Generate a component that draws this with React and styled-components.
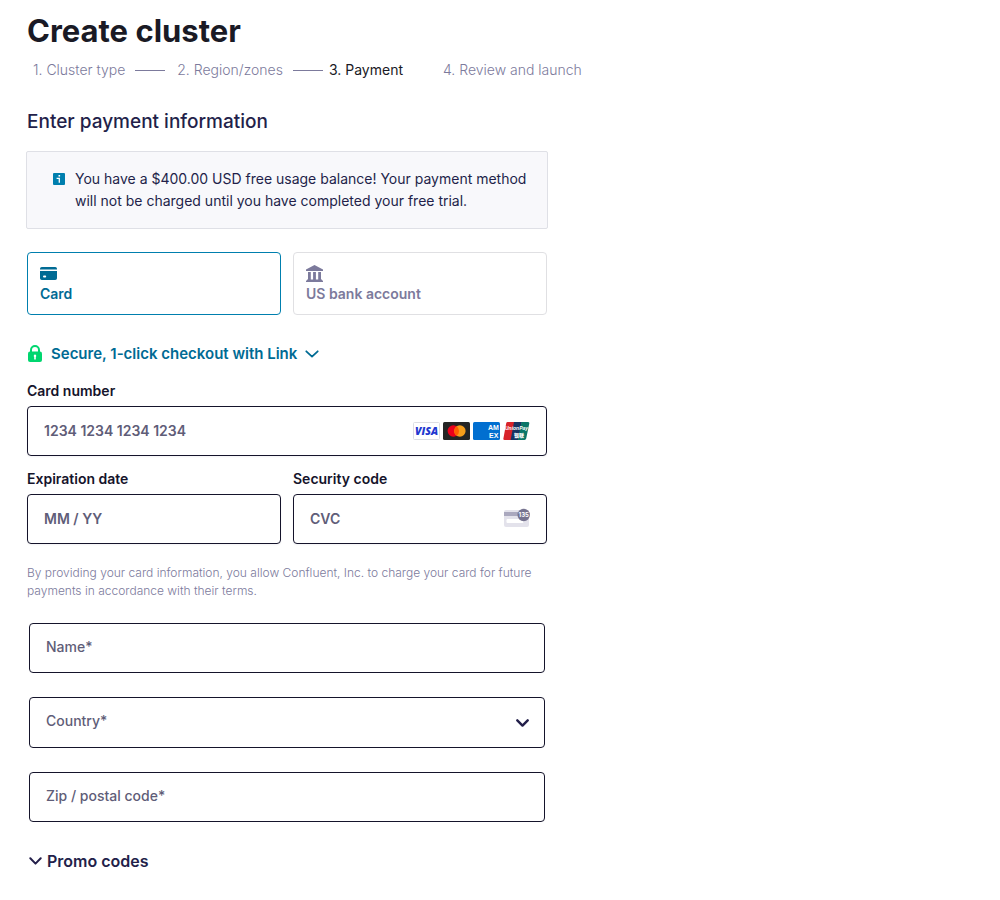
import React from 'react';
import styled, { createGlobalStyle } from 'styled-components';

const ink = '#15142b';
const navy = '#231f4a';
const muted = '#7c7a9c';
const placeholder = '#5f5d78';
const blue = '#006b94';
const brightBlue = '#007fae';

const GlobalStyle = createGlobalStyle`
  *, *::before, *::after { box-sizing: border-box; }
  body {
    margin: 0;
    background: #fff;
    color: ${navy};
    font-family: Inter, "Liberation Sans", sans-serif;
    font-size: 14px;
    line-height: 20px;
  }
  h1, h2, p, ol { margin: 0; padding: 0; }
  button, input, select { font: inherit; color: inherit; }
  svg { display: block; flex-shrink: 0; }
`;

const Page = styled.main`
  padding: 11px 27px 28px;
`;

const Title = styled.h1`
  color: #1a1a25;
  font-size: 31px;
  font-weight: 700;
  line-height: 40px;
`;

const Steps = styled.ol`
  display: flex;
  flex-wrap: wrap;
  align-items: center;
  margin-top: 9px;
  padding-left: 6px;
  list-style: none;
`;

const lineGap = (p) => (p.$current ? 0 : p.$beforeCurrent ? 6 : 12);

const Step = styled.li`
  display: flex;
  align-items: center;
  color: ${(p) => (p.$current ? '#1a1a25' : muted)};
  font-weight: ${(p) => (p.$current ? 400 : 300)};
  white-space: nowrap;

  &:not(:last-child)::after {
    content: "";
    width: 30px;
    height: 1px;
    margin: 0 ${lineGap}px 0 10px;
    background: ${(p) => (p.$current ? 'transparent' : muted)};
  }
`;

const Column = styled.form`
  max-width: 520px;
  margin-top: 28px;
`;

const Heading = styled.h2`
  font-size: 19px;
  font-weight: 500;
  line-height: 28px;
`;

const Notice = styled.div`
  display: flex;
  gap: 10px;
  margin: 15px -1px 0;
  padding: 16px 16px 16px 26px;
  border: 1px solid #dfe0e6;
  border-radius: 2px;
  background: #f8f8fb;
  line-height: 22px;

  svg { margin-top: 5px; }
`;

const Pair = styled.div`
  display: grid;
  grid-template-columns: 1fr 1fr;
  gap: 12px;
  margin-top: ${(p) => p.$top}px;
`;

const MethodTab = styled.button`
  display: flex;
  flex-direction: column;
  align-items: flex-start;
  gap: 2px;
  padding: 12px 12px 10px;
  border: 1px solid ${(p) => (p.$active ? brightBlue : '#e0e0e3')};
  border-radius: 4px;
  background: #fff;
  color: ${(p) => (p.$active ? blue : muted)};
  font-weight: 600;
  cursor: pointer;
`;

const LinkToggle = styled.button`
  display: flex;
  align-items: center;
  gap: 8px;
  margin-top: 29px;
  padding: 0;
  border: 0;
  background: none;
  color: ${blue};
  font-size: 15px;
  font-weight: 600;
  cursor: pointer;
`;

const Field = styled.div`
  min-width: 0;
  margin-top: ${(p) => p.$top || 0}px;
`;

const Label = styled.label`
  display: block;
  margin-bottom: 5px;
  color: ${ink};
  font-weight: 600;
`;

const InputFrame = styled.div`
  display: flex;
  align-items: center;
  gap: 3px;
  height: 50px;
  padding: 0 16px;
  border: 1px solid ${ink};
  border-radius: 4px;
  background: #fff;
  box-shadow: 0 1px 2px rgba(20, 20, 50, 0.05);
`;

const BareInput = styled.input`
  flex: 1;
  min-width: 0;
  padding: 0;
  border: 0;
  outline: 0;
  background: none;
  font-weight: 600;
  &::placeholder { color: ${placeholder}; opacity: 1; }
`;

const Terms = styled.p`
  margin-top: 20px;
  color: ${muted};
  font-size: 12px;
  font-weight: 300;
  line-height: 18px;
`;

const Billing = styled.div`
  display: grid;
  gap: 24px;
  margin-top: 23px;
  padding: 0 2px;
`;

const BillingInput = styled.input`
  width: 100%;
  height: 50px;
  padding: 0 16px 4px;
  border: 1px solid ${ink};
  border-radius: 4px;
  background: #fff;
  font-weight: 500;
  &::placeholder { color: ${placeholder}; opacity: 1; }
`;

const SelectWrap = styled.div`
  display: grid;
  align-items: center;
  > * { grid-area: 1 / 1; }
  svg { justify-self: end; margin-right: 16px; pointer-events: none; }
`;

const BillingSelect = styled.select`
  width: 100%;
  height: 51px;
  padding: 0 16px 4px;
  border: 1px solid ${ink};
  border-radius: 4px;
  background: #fff;
  color: ${placeholder};
  font-weight: 500;
  appearance: none;
`;

const PromoToggle = styled.button`
  display: flex;
  align-items: center;
  gap: 5px;
  margin-top: 29px;
  padding: 0 0 0 2px;
  border: 0;
  background: none;
  font-size: 16px;
  font-weight: 600;
  cursor: pointer;
`;

const InfoIcon = () => (
  <svg width="12" height="12" viewBox="0 0 12 12" aria-hidden="true">
    <rect width="12" height="12" rx="1" fill={brightBlue} />
    <path d="M3.6 5.3h2.7v4.4" fill="none" stroke="#fff" strokeWidth="1.3" />
    <rect x="5.5" y="2" width="1.6" height="1.6" fill="#fff" />
  </svg>
);

const CardIcon = () => (
  <svg width="17" height="17" viewBox="0 0 17 17" aria-hidden="true">
    <path fill="currentColor" d="M0 4.4V3.8A1.8 1.8 0 0 1 1.8 2h13.4A1.8 1.8 0 0 1 17 3.8v.6z" />
    <path fill="currentColor" fillRule="evenodd" d="M0 6h17v7.2a1.8 1.8 0 0 1-1.8 1.8H1.8A1.8 1.8 0 0 1 0 13.2zm4 4.6a1 1 0 0 0 0 2h1.2a1 1 0 0 0 0-2z" />
  </svg>
);

const BankIcon = () => (
  <svg width="17" height="17" viewBox="0 0 17 17" aria-hidden="true">
    <path fill="currentColor" d="M8.5 0 17 4.4V6H0V4.4zM2 7h2.8v7.6H2zm5.1 0h2.8v7.6H7.1zm5.1 0H15v7.6h-2.8zM1 14.6h15v.8h1V17H0v-1.6h1z" />
  </svg>
);

const LockIcon = () => (
  <svg width="16" height="18" viewBox="0 0 16 18" aria-hidden="true">
    <path d="M4 8V5a4 4 0 0 1 8 0V8" fill="none" stroke="#00d66f" strokeWidth="2" />
    <rect x="1" y="6.5" width="14" height="10.5" rx="2" fill="#00d66f" />
    <path fill="#fff" d="M8 9.6a1.3 1.3 0 0 1 .8 2.3v2.5H7.2v-2.5A1.3 1.3 0 0 1 8 9.6z" />
  </svg>
);

const Chevron = ({ width, height, stroke }) => (
  <svg width={width} height={height} viewBox={`0 0 ${width} ${height}`} aria-hidden="true">
    <path
      d={`M1.3 1.3 L${width / 2} ${height - 1.4} L${width - 1.3} 1.3`}
      fill="none"
      stroke="currentColor"
      strokeWidth={stroke}
      strokeLinecap="round"
      strokeLinejoin="round"
    />
  </svg>
);

const VisaLogo = () => (
  <svg width="27" height="18" viewBox="0 0 27 18" role="img" aria-label="Visa">
    <rect x=".5" y=".5" width="26" height="17" rx="1" fill="#fff" stroke="#dddee3" />
    <text x="13.5" y="13" textAnchor="middle" fontFamily="Open Sans" fontSize="10.5" fontWeight="800" fontStyle="italic" fill="#2238cf">VISA</text>
  </svg>
);

const MastercardLogo = () => (
  <svg width="27" height="18" viewBox="0 0 27 18" role="img" aria-label="Mastercard">
    <rect width="27" height="18" rx="1.5" fill="#252525" />
    <circle cx="10.3" cy="9" r="5.7" fill="#eb001b" />
    <circle cx="16.9" cy="9" r="5.7" fill="#f79e1b" />
    <path d="M13.6 4.3a5.7 5.7 0 0 1 0 9.4 5.7 5.7 0 0 1 0-9.4z" fill="#ff5f00" />
  </svg>
);

const AmexLogo = () => (
  <svg width="27" height="18" viewBox="0 0 27 18" role="img" aria-label="American Express">
    <rect width="27" height="18" rx="1.5" fill="#016fd0" />
    <g fontFamily="Liberation Sans" fontSize="7" fontWeight="700" fill="#fff">
      <text x="15" y="8">AM</text>
      <text x="16" y="16">EX</text>
    </g>
  </svg>
);

const UnionPayLogo = () => (
  <svg width="27" height="18" viewBox="0 0 27 18" role="img" aria-label="UnionPay">
    <path d="M4.6 0H12L8.4 18H1.6Q0 18 .4 16.4L3.2 1.3Q3.5 0 4.6 0z" fill="#d8232a" />
    <path d="M11 0h8l-3.6 18H7.6z" fill="#173463" />
    <path d="M18.5 0h6.6q1.6 0 1.2 1.6l-3.1 15Q22.9 18 21.5 18H14.8z" fill="#0a7668" />
    <text x="13.5" y="8" textAnchor="middle" fontFamily="Liberation Sans" fontSize="5" fontWeight="700" fontStyle="italic" fill="#fff">UnionPay</text>
    <text x="16" y="15" textAnchor="middle" fontFamily="Noto Sans CJK SC" fontSize="5" fontWeight="900" fill="#fff">银联</text>
  </svg>
);

const CvcIcon = () => (
  <svg width="26" height="22" viewBox="0 0 26 22" aria-hidden="true">
    <rect y="2" width="25" height="17" rx="2" fill="#e3e2eb" />
    <rect y="4" width="25" height="4" fill="#aaa8be" />
    <rect x="2.5" y="11" width="17" height="4" rx="1" fill="#fff" />
    <circle cx="19.7" cy="7" r="6.2" fill="#76738f" />
    <text x="19.7" y="9.3" textAnchor="middle" fontFamily="Inter" fontSize="6" fontWeight="700" fill="#fff">135</text>
  </svg>
);

export default function App() {
  return (
    <>
      <GlobalStyle />
      <Page>
        <Title>Create cluster</Title>
        <Steps>
          <Step>1. Cluster type</Step>
          <Step $beforeCurrent>2. Region/zones</Step>
          <Step $current aria-current="step">3. Payment</Step>
          <Step>4. Review and launch</Step>
        </Steps>

        <Column onSubmit={(e) => e.preventDefault()}>
          <Heading>Enter payment information</Heading>
          <Notice>
            <InfoIcon />
            <p>
              You have a $400.00 USD free usage balance! Your payment method will not be charged
              until you have completed your free trial.
            </p>
          </Notice>

          <Pair $top={23}>
            <MethodTab type="button" $active aria-pressed="true">
              <CardIcon />
              Card
            </MethodTab>
            <MethodTab type="button" aria-pressed="false">
              <BankIcon />
              US bank account
            </MethodTab>
          </Pair>

          <LinkToggle type="button" aria-expanded="false">
            <LockIcon />
            Secure, 1-click checkout with Link
            <Chevron width={14} height={8} stroke={1.8} />
          </LinkToggle>

          <Field $top={17}>
            <Label htmlFor="card-number">Card number</Label>
            <InputFrame>
              <BareInput id="card-number" inputMode="numeric" placeholder="1234 1234 1234 1234" />
              <VisaLogo />
              <MastercardLogo />
              <AmexLogo />
              <UnionPayLogo />
            </InputFrame>
          </Field>

          <Pair $top={13}>
            <Field>
              <Label htmlFor="expiry">Expiration date</Label>
              <InputFrame>
                <BareInput id="expiry" inputMode="numeric" placeholder="MM / YY" />
              </InputFrame>
            </Field>
            <Field>
              <Label htmlFor="cvc">Security code</Label>
              <InputFrame>
                <BareInput id="cvc" inputMode="numeric" placeholder="CVC" />
                <CvcIcon />
              </InputFrame>
            </Field>
          </Pair>

          <Terms>
            By providing your card information, you allow Confluent, Inc. to charge your card for
            future payments in accordance with their terms.
          </Terms>

          <Billing>
            <BillingInput aria-label="Name" placeholder="Name*" />
            <SelectWrap>
              <BillingSelect aria-label="Country" defaultValue="">
                <option value="">Country*</option>
                <option value="US">United States</option>
              </BillingSelect>
              <Chevron width={13} height={8} stroke={2.4} />
            </SelectWrap>
            <BillingInput aria-label="Zip / postal code" placeholder="Zip / postal code*" />
          </Billing>

          <PromoToggle type="button" aria-expanded="false">
            <Chevron width={13} height={8} stroke={2} />
            Promo codes
          </PromoToggle>
        </Column>
      </Page>
    </>
  );
}
